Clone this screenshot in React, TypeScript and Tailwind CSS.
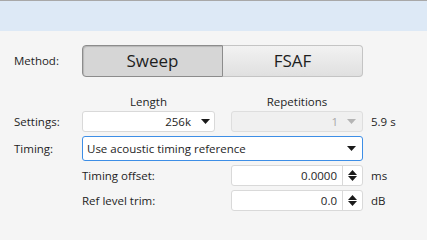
import React from "react";

const font = { fontFamily: '"Open Sans", "Noto Sans", sans-serif' };

function Tri({ color = "#1a1a1a", up = false }: { color?: string; up?: boolean }) {
  return (
    <svg width="9" height="5" viewBox="0 0 9 5">
      {up ? <polygon points="0,5 9,5 4.5,0" fill={color} /> : <polygon points="0,0 9,0 4.5,5" fill={color} />}
    </svg>
  );
}

function Spinner({ value }: { value: string }) {
  return (
    <div className="w-[132px] h-[21px] flex bg-white border border-[#d9d9d9] rounded-[3px]">
      <div className="flex-1 flex items-center justify-end pr-[5px] text-[11.5px] text-[#1e1e1e]">{value}</div>
      <div className="w-[20px] border-l border-[#d9d9d9] flex flex-col items-center justify-center gap-[1px]">
        <Tri up />
        <Tri />
      </div>
    </div>
  );
}

export default function App() {
  return (
    <div className="w-[427px] h-[240px] bg-[#f5f5f5] overflow-hidden text-[#1e1e1e]" style={font}>
      <div className="h-px bg-[#a8a8a8]" />
      <div className="h-[30px] bg-[#dde9f6]" />
      <div className="pl-[14px] pt-[14px]">
        <div className="flex items-center h-[32px]">
          <div className="w-[68px] text-[11.5px]">Method:</div>
          <div className="flex h-[32px]">
            <div className="w-[141px] h-full flex items-center justify-center bg-[#d6d6d6] border border-[#8c8c8c] rounded-l-[4px] shadow-[inset_1px_1px_1px_rgba(0,0,0,0.15)] text-[17px] font-normal text-[#1e1e1e]">
              Sweep
            </div>
            <div className="w-[140px] h-full flex items-center justify-center bg-gradient-to-b from-[#f2f2f2] to-[#e0e0e0] border border-l-0 border-[#c4c4c4] rounded-r-[4px] text-[17px] font-normal text-[#1e1e1e]">
              FSAF
            </div>
          </div>
        </div>

        <div className="flex mt-[17px] h-[16px] items-center text-[11.5px]">
          <div className="w-[68px]" />
          <div className="w-[133px] text-center">Length</div>
          <div className="w-[16px]" />
          <div className="w-[132px] text-center">Repetitions</div>
        </div>

        <div className="flex items-center mt-[1px] h-[21px] text-[11.5px]">
          <div className="w-[68px]">Settings:</div>
          <div className="w-[133px] h-[21px] flex items-center justify-end bg-white border border-[#d9d9d9] rounded-[3px] pr-[4px]">
            <span className="mr-[10px]">256k</span>
            <Tri />
          </div>
          <div className="w-[16px]" />
          <div className="w-[132px] h-[21px] flex items-center justify-end bg-[#f0f0f0] border border-[#dedede] rounded-[3px] pr-[6px]">
            <span className="mr-[9px] text-[#a8a8a8]">1</span>
            <Tri color="#b4b4b4" />
          </div>
          <div className="ml-[8px]">5.9 s</div>
        </div>

        <div className="flex items-center mt-[4px] h-[25px] text-[11.5px]">
          <div className="w-[68px]">Timing:</div>
          <div className="w-[281px] h-[25px] flex items-center justify-between bg-white border border-[#3d8ee6] rounded-[3px] pl-[4px] pr-[6px]">
            <span>Use acoustic timing reference</span>
            <Tri />
          </div>
        </div>

        <div className="flex items-center mt-[4px] h-[21px] text-[11.5px]">
          <div className="w-[68px]" />
          <div className="w-[149px]">Timing offset:</div>
          <Spinner value="0.0000" />
          <div className="ml-[8px]">ms</div>
        </div>

        <div className="flex items-center mt-[4px] h-[21px] text-[11.5px]">
          <div className="w-[68px]" />
          <div className="w-[149px]">Ref level trim:</div>
          <Spinner value="0.0" />
          <div className="ml-[8px]">dB</div>
        </div>
      </div>
    </div>
  );
}
